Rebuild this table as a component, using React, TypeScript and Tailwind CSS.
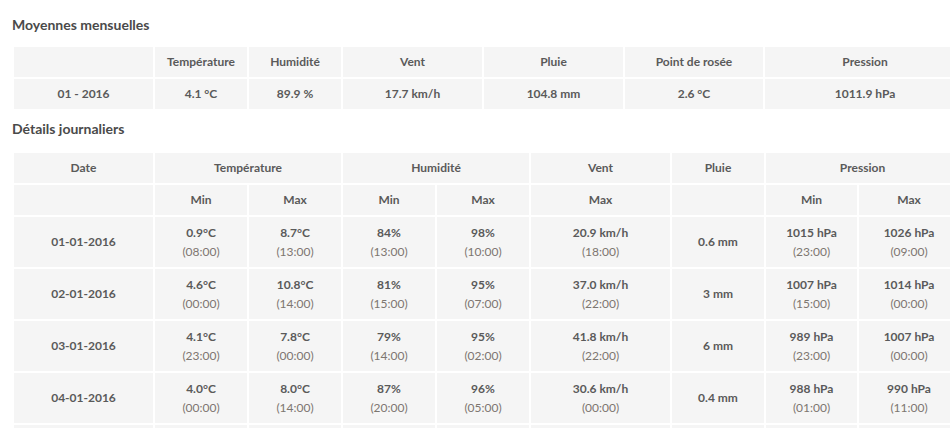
const monthly = {
  headers: ['', 'Température', 'Humidité', 'Vent', 'Pluie', 'Point de rosée', 'Pression'],
  values: ['01 - 2016', '4.1 °C', '89.9 %', '17.7 km/h', '104.8 mm', '2.6 °C', '1011.9 hPa'],
};

type Val = { v: string; t: string };

type Day = {
  date: string;
  tmin: Val;
  tmax: Val;
  hmin: Val;
  hmax: Val;
  wind: Val;
  rain: string;
  pmin: Val;
  pmax: Val;
};

const days: Day[] = [
  {
    date: '01-01-2016',
    tmin: { v: '0.9°C', t: '(08:00)' },
    tmax: { v: '8.7°C', t: '(13:00)' },
    hmin: { v: '84%', t: '(13:00)' },
    hmax: { v: '98%', t: '(10:00)' },
    wind: { v: '20.9 km/h', t: '(18:00)' },
    rain: '0.6 mm',
    pmin: { v: '1015 hPa', t: '(23:00)' },
    pmax: { v: '1026 hPa', t: '(09:00)' },
  },
  {
    date: '02-01-2016',
    tmin: { v: '4.6°C', t: '(00:00)' },
    tmax: { v: '10.8°C', t: '(14:00)' },
    hmin: { v: '81%', t: '(15:00)' },
    hmax: { v: '95%', t: '(07:00)' },
    wind: { v: '37.0 km/h', t: '(22:00)' },
    rain: '3 mm',
    pmin: { v: '1007 hPa', t: '(15:00)' },
    pmax: { v: '1014 hPa', t: '(00:00)' },
  },
  {
    date: '03-01-2016',
    tmin: { v: '4.1°C', t: '(23:00)' },
    tmax: { v: '7.8°C', t: '(00:00)' },
    hmin: { v: '79%', t: '(14:00)' },
    hmax: { v: '95%', t: '(02:00)' },
    wind: { v: '41.8 km/h', t: '(22:00)' },
    rain: '6 mm',
    pmin: { v: '989 hPa', t: '(23:00)' },
    pmax: { v: '1007 hPa', t: '(00:00)' },
  },
  {
    date: '04-01-2016',
    tmin: { v: '4.0°C', t: '(00:00)' },
    tmax: { v: '8.0°C', t: '(14:00)' },
    hmin: { v: '87%', t: '(20:00)' },
    hmax: { v: '96%', t: '(05:00)' },
    wind: { v: '30.6 km/h', t: '(00:00)' },
    rain: '0.4 mm',
    pmin: { v: '988 hPa', t: '(01:00)' },
    pmax: { v: '990 hPa', t: '(11:00)' },
  },
];

const Cell = ({ children, className = '' }: { children?: React.ReactNode; className?: string }) => (
  <div className={`bg-[#f5f5f5] flex flex-col justify-center items-center text-center ${className}`}>
    {children}
  </div>
);

const Pair = ({ val }: { val: Val }) => (
  <Cell>
    <span className="leading-[19px] font-bold">{val.v}</span>
    <span className="leading-[19px] font-normal text-[#7d7670]">{val.t}</span>
  </Cell>
);

const App = () => {
  return (
    <div
      className="w-[950px] h-[428px] overflow-hidden bg-white text-[#5a5a5a] pt-[15px] px-3"
      style={{ fontFamily: 'Lato, "Open Sans", sans-serif' }}
    >
      <h2 className="text-[14px] leading-[20px] font-bold text-[#4a4a4a]">Moyennes mensuelles</h2>

      <div className="mt-[10px] p-[2px] pr-0 grid grid-cols-[139px_92px_92px_139px_139px_138px_200px] grid-rows-[30px_30px] gap-[2px] text-[12px] font-bold w-max">
        {monthly.headers.map((h, i) => (
          <Cell key={'h' + i}>{h}</Cell>
        ))}
        {monthly.values.map((v, i) => (
          <Cell key={'v' + i}>{v}</Cell>
        ))}
      </div>

      <h2 className="mt-[8px] text-[14px] leading-[20px] font-bold text-[#4a4a4a]">Détails journaliers</h2>

      <div className="mt-[12px] p-[2px] pr-0 grid grid-cols-[139px_92px_92px_92px_92px_139px_92px_91px_100px] grid-rows-[30px_30px_50px_50px_50px_50px_50px] gap-[2px] text-[12px] font-bold w-max">
        <Cell>Date</Cell>
        <Cell className="col-span-2">Température</Cell>
        <Cell className="col-span-2">Humidité</Cell>
        <Cell>Vent</Cell>
        <Cell>Pluie</Cell>
        <Cell className="col-span-2">Pression</Cell>

        <Cell />
        <Cell>Min</Cell>
        <Cell>Max</Cell>
        <Cell>Min</Cell>
        <Cell>Max</Cell>
        <Cell>Max</Cell>
        <Cell />
        <Cell>Min</Cell>
        <Cell>Max</Cell>

        {days.map((d) => (
          <div key={d.date} className="contents">
            <Cell>{d.date}</Cell>
            <Pair val={d.tmin} />
            <Pair val={d.tmax} />
            <Pair val={d.hmin} />
            <Pair val={d.hmax} />
            <Pair val={d.wind} />
            <Cell>{d.rain}</Cell>
            <Pair val={d.pmin} />
            <Pair val={d.pmax} />
          </div>
        ))}

        {/* next row starts just at the bottom edge */}
        {Array.from({ length: 9 }).map((_, i) => (
          <Cell key={'n' + i} />
        ))}
      </div>
    </div>
  );
};

export default App;
